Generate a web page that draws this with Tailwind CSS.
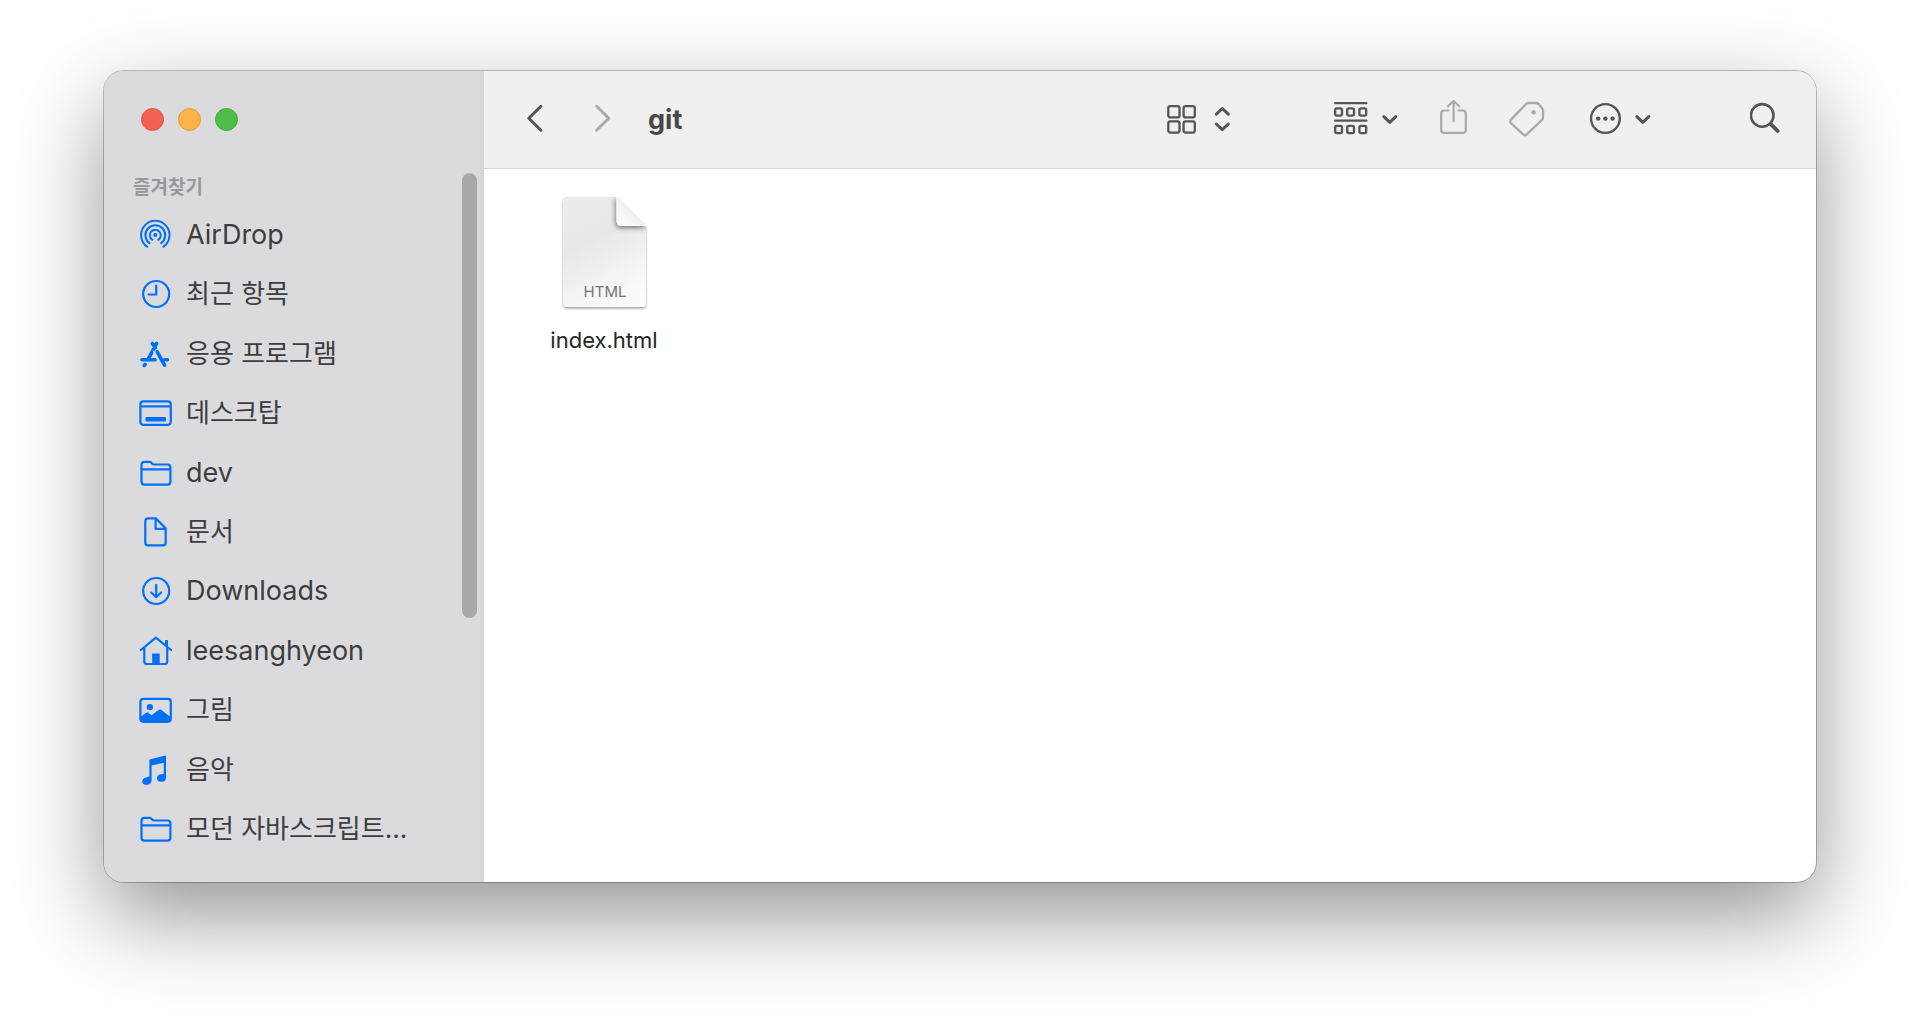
<!DOCTYPE html>
<html lang="ko">
<head>
<meta charset="utf-8">
<meta name="viewport" content="width=device-width, initial-scale=1">
<title>git</title>
<script src="https://cdn.jsdelivr.net/npm/@tailwindcss/browser@4"></script>
</head>
<body class="bg-white font-[Inter,'Noto_Sans_CJK_KR',sans-serif] text-[#3d3d3f]">
<div class="flex min-h-screen px-[104px] pt-[71px] pb-[138px]">
  <div class="flex flex-1 overflow-hidden rounded-[20px] bg-white shadow-[0_0_0_1px_rgba(0,0,0,0.24),0_34px_88px_rgba(0,0,0,0.42)]">

    <!-- Sidebar -->
    <aside class="relative flex w-[380px] shrink-0 flex-col border-r-4 border-[#d7d7d8] bg-[#dbdbdd] pb-[23px]">
      <div class="flex gap-[14px] pt-[37px] pl-[37px]">
        <button aria-label="닫기" class="size-[23px] rounded-full border border-[#d9544a] bg-[#f26052]"></button>
        <button aria-label="최소화" class="size-[23px] rounded-full border border-[#dba03d] bg-[#fab544]"></button>
        <button aria-label="확대" class="size-[23px] rounded-full border border-[#43a940] bg-[#4dbe4a]"></button>
      </div>
      <h2 class="mt-[43px] pl-[29px] text-[19px] leading-7 font-bold text-[#98989a]">즐겨찾기</h2>
      <nav class="mt-[3px] flex flex-1 flex-col">
        <ul class="grid flex-1 auto-rows-fr pr-12 pl-[34px] text-[26px] leading-8 text-[#3d3d3f]">
          <li class="flex"><a href="#" class="flex items-center gap-[14px] text-[27px]">
            <svg class="size-[34px] shrink-0" viewBox="0 0 34 34" fill="none" stroke="#0070f8" stroke-width="2" stroke-linecap="round"><circle cx="17.3" cy="17" r="2" fill="#0070f8" stroke="none"/><path d="M14.3 21.8a5.5 5.5 0 1 1 6 0M11.5 25.1a9.9 9.9 0 1 1 11.6 0M9.3 28.8a14.2 14.2 0 1 1 16 0"/></svg>
            AirDrop</a></li>
          <li class="flex"><a href="#" class="flex items-center gap-[14px]">
            <svg class="size-[34px] shrink-0" viewBox="0 0 34 34" fill="none" stroke="#0070f8" stroke-width="2.2" stroke-linecap="round"><circle cx="18.2" cy="17" r="13"/><path d="M18.2 8.5V17.5H10.5"/></svg>
            최근 항목</a></li>
          <li class="flex"><a href="#" class="flex items-center gap-[14px]">
            <svg class="size-[34px] shrink-0" viewBox="0 0 34 34" fill="none" stroke="#0070f8" stroke-width="3.6" stroke-linecap="round"><path d="M14.3 6.4 17.3 10.8M18.7 6.4 10.6 21.4M3.9 22.7H17M26.5 22.7H29.4M19.2 14.8 26.6 28.1M7.2 27.4 6.2 28.4"/><path stroke="#dbdbdd" stroke-width="1.3" d="M15.6 14.5 23.6 29.5"/></svg>
            응용 프로그램</a></li>
          <li class="flex"><a href="#" class="flex items-center gap-[14px]">
            <svg class="size-[34px] shrink-0" viewBox="0 0 34 34" fill="none" stroke="#0070f8" stroke-width="2.2"><rect x="2.4" y="5.4" width="30.4" height="23.4" rx="3"/><path d="M3 10.4H33"/><rect x="7.5" y="21" width="20.5" height="4.4" rx="1" fill="#0070f8" stroke="none"/></svg>
            데스크탑</a></li>
          <li class="flex"><a href="#" class="flex items-center gap-[14px] text-[27px]">
            <svg class="size-[34px] shrink-0" viewBox="0 0 34 34" fill="none" stroke="#0070f8" stroke-width="2.2" stroke-linejoin="round"><path d="M6.5 5.9H11.8C13.8 5.9 14 8.5 16 8.5H29.5Q32.4 8.5 32.4 11.4V25.7Q32.4 28.6 29.5 28.6H6.4Q3.5 28.6 3.5 25.7V8.8Q3.5 5.9 6.5 5.9ZM3.5 13.3H32.4"/></svg>
            dev</a></li>
          <li class="flex"><a href="#" class="flex items-center gap-[14px]">
            <svg class="size-[34px] shrink-0" viewBox="0 0 34 34" fill="none" stroke="#0070f8" stroke-width="2.2" stroke-linejoin="round"><path d="M17.8 3.4H10Q7.3 3.4 7.3 6.1V27.7Q7.3 30.4 10 30.4H25Q27.7 30.4 27.7 27.7V13.2ZM17.6 3.6V13.8H27.7"/></svg>
            문서</a></li>
          <li class="flex"><a href="#" class="flex items-center gap-[14px] text-[27px]">
            <svg class="size-[34px] shrink-0" viewBox="0 0 34 34" fill="none" stroke="#0070f8" stroke-width="2.2" stroke-linecap="round" stroke-linejoin="round"><circle cx="18.2" cy="17" r="13"/><path d="M18.2 10.8V23M13.3 18.5 18.2 23.2 23.1 18.5"/></svg>
            Downloads</a></li>
          <li class="flex"><a href="#" class="flex items-center gap-[14px] text-[27px]">
            <svg class="size-[34px] shrink-0" viewBox="0 0 34 34" fill="none" stroke="#0070f8" stroke-width="2.2" stroke-linecap="round" stroke-linejoin="round"><path d="M2.8 16 17.9 3.6 33 16M6.3 14V27.8Q6.3 30 8.5 30H27Q29.2 30 29.2 27.8V14"/><path fill="#0070f8" stroke="none" d="M14.2 19.5H21.7V30.5H14.2ZM27 6.6Q27 6 27.6 6H29.4Q30 6 30 6.6V13.2L27 10.6Z"/></svg>
            leesanghyeon</a></li>
          <li class="flex"><a href="#" class="flex items-center gap-[14px]">
            <svg class="size-[34px] shrink-0" viewBox="0 0 34 34" fill="none" stroke="#0070f8" stroke-width="2.2"><rect x="2.4" y="5.8" width="30.4" height="23" rx="3"/><circle cx="11.9" cy="14.1" r="3.2" fill="#0070f8" stroke="none"/><path fill="#0070f8" stroke="none" d="M3 23.5 8.2 19.7Q9.3 19 10.4 19.8L13.6 22.2 20.5 17Q22 16 23.5 17L33 24.5V27Q33 29 31 29H5Q3 29 3 27Z"/></svg>
            그림</a></li>
          <li class="flex"><a href="#" class="flex items-center gap-[14px]">
            <svg class="size-[34px] shrink-0" viewBox="0 0 34 34" fill="#0070f8"><path d="M12.3 6.2 27 2.5Q28 2.3 28 3.3V24.5Q28 28.8 23.7 28.8 19 28.8 19 25.3 19 22 22.8 21.3L25.8 20.7V9.7L13.6 12.5V27Q13.6 31.8 8.8 31.8 4.3 31.8 4.3 28.4 4.3 25.2 8 24.4L11.4 23.6V7.3Q11.4 6.4 12.3 6.2Z"/></svg>
            음악</a></li>
          <li class="flex"><a href="#" class="flex items-center gap-[14px]">
            <svg class="size-[34px] shrink-0" viewBox="0 0 34 34" fill="none" stroke="#0070f8" stroke-width="2.2" stroke-linejoin="round"><path d="M6.5 5.9H11.8C13.8 5.9 14 8.5 16 8.5H29.5Q32.4 8.5 32.4 11.4V25.7Q32.4 28.6 29.5 28.6H6.4Q3.5 28.6 3.5 25.7V8.8Q3.5 5.9 6.5 5.9ZM3.5 13.3H32.4"/></svg>
            모던 자바스크립트...</a></li>
        </ul>
      </nav>
      <!-- Overlay scrollbar thumb -->
      <div class="absolute top-[102px] right-[3px] h-[445px] w-[15px] rounded-full bg-[#a9a9ab]"></div>
    </aside>

    <!-- Main area -->
    <div class="flex min-w-0 flex-1 flex-col">
      <header class="flex h-[98px] shrink-0 items-center border-b border-[#d5d5d5] bg-[#f0f0f0] pr-[34px] pl-[42px] text-[#555]">
        <div class="flex gap-[50px]">
          <button aria-label="뒤로"><svg class="h-[41px] w-[18px]" viewBox="0 0 18 41" fill="none" stroke="currentColor" stroke-width="3" stroke-linecap="round" stroke-linejoin="round"><path d="M14.9 7.3 2.8 19.3 14.9 31.2"/></svg></button>
          <button aria-label="앞으로" class="text-[#aaa]" disabled><svg class="h-[41px] w-[18px]" viewBox="0 0 18 41" fill="none" stroke="currentColor" stroke-width="3" stroke-linecap="round" stroke-linejoin="round"><path d="M2.6 7.3 14.8 19.3 2.6 31.2"/></svg></button>
        </div>
        <h1 class="mr-auto ml-9 text-[27px] leading-8 font-bold text-[#474747]">git</h1>
        <button aria-label="보기" class="flex gap-4">
          <svg class="h-[41px] w-[30px]" viewBox="0 0 30 41" fill="none" stroke="currentColor" stroke-width="2.3"><rect x="1.3" y="7.2" width="11.2" height="11.2" rx="2"/><rect x="16.6" y="7.2" width="11.2" height="11.2" rx="2"/><rect x="1.3" y="22.4" width="11.2" height="11.2" rx="2"/><rect x="16.6" y="22.4" width="11.2" height="11.2" rx="2"/></svg>
          <svg class="h-[41px] w-[18px]" viewBox="0 0 18 41" fill="none" stroke="currentColor" stroke-width="3" stroke-linecap="round" stroke-linejoin="round"><path d="M3.3 15.2 9.3 9.5 15.3 15.2M3.3 25 9.3 30.7 15.3 25"/></svg>
        </button>
        <button aria-label="그룹" class="ml-[102px] flex gap-3">
          <svg class="h-[41px] w-9" viewBox="0 0 36 41" fill="none" stroke="currentColor" stroke-width="2.3" stroke-linecap="round"><path d="M2.2 4.2H33.4M2.2 21.7H33.4"/><rect x="2.2" y="9.4" width="6.8" height="7.2" rx="1.6"/><rect x="14.2" y="9.4" width="6.8" height="7.2" rx="1.6"/><rect x="26.4" y="9.4" width="6.8" height="7.2" rx="1.6"/><rect x="2.2" y="26.9" width="6.8" height="7.2" rx="1.6"/><rect x="14.2" y="26.9" width="6.8" height="7.2" rx="1.6"/><rect x="26.4" y="26.9" width="6.8" height="7.2" rx="1.6"/></svg>
          <svg class="h-[41px] w-[18px]" viewBox="0 0 18 41" fill="none" stroke="currentColor" stroke-width="3" stroke-linecap="round" stroke-linejoin="round"><path d="M2.8 17.6 8.8 23.3 14.8 17.6"/></svg>
        </button>
        <button aria-label="공유" class="ml-10 text-[#aaa]" disabled><svg class="h-[41px] w-[30px]" viewBox="0 0 30 41" fill="none" stroke="currentColor" stroke-width="2.2" stroke-linecap="round" stroke-linejoin="round"><path d="M9.5 11.5H5Q2.2 11.5 2.2 14.3V31Q2.2 33.8 5 33.8H24Q26.8 33.8 26.8 31V14.3Q26.8 11.5 24 11.5H19.5M14.6 22.3V2.2M8.9 7.3 14.6 2 20.3 7.3"/></svg></button>
        <button aria-label="태그" class="ml-[39px] text-[#aaa]" disabled><svg class="h-[41px] w-[38px]" viewBox="0 0 38 41" fill="none" stroke="currentColor" stroke-width="2.3" stroke-linejoin="round"><path d="M20.5 4H28.2Q29.5 4 30.5 5L34 9Q35 10 35 11.3V18.3Q35 19.9 33.9 21L19 35.2Q16.9 37.2 14.8 35.2L3.2 24.3Q1.2 22.4 3.2 20.4L18 5Q19 4 20.5 4Z"/><circle cx="25.6" cy="13.3" r="2.2" fill="currentColor" stroke="none"/></svg></button>
        <button aria-label="동작" class="ml-11 flex gap-3">
          <svg class="h-[41px] w-8" viewBox="0 0 32 41" fill="none" stroke="currentColor" stroke-width="2.4"><circle cx="15.4" cy="19.5" r="14.4"/><g fill="currentColor" stroke="none"><circle cx="8.2" cy="19.6" r="2.2"/><circle cx="15.4" cy="19.6" r="2.2"/><circle cx="22.6" cy="19.6" r="2.2"/></g></svg>
          <svg class="h-[41px] w-[18px]" viewBox="0 0 18 41" fill="none" stroke="currentColor" stroke-width="3" stroke-linecap="round" stroke-linejoin="round"><path d="M2.8 17.6 8.8 23.3 14.8 17.6"/></svg>
        </button>
        <button aria-label="검색" class="ml-[98px]"><svg class="h-[41px] w-8" viewBox="0 0 32 41" fill="none" stroke="currentColor" stroke-linecap="round"><circle cx="12.2" cy="16.4" r="11.3" stroke-width="2.6"/><path stroke-width="3.8" d="M20.8 25.2 27.6 31.9"/></svg></button>
      </header>

      <main class="flex flex-1 flex-wrap content-start pt-[27px] pl-14">
        <figure class="flex w-[128px] flex-col items-center">
          <svg class="h-[116px] w-[88px]" viewBox="0 0 88 116" role="img" aria-label="HTML 문서">
            <defs>
              <linearGradient id="page" x1=".3" y1="0" x2=".7" y2="1"><stop offset="0" stop-color="#ececec"/><stop offset=".35" stop-color="#e8e8e8"/><stop offset="1" stop-color="#fcfcfc"/></linearGradient>
              <linearGradient id="fold" x1="0" y1="1" x2=".6" y2=".4"><stop offset="0" stop-color="#fff"/><stop offset="1" stop-color="#ececec"/></linearGradient>
              <filter id="drop" x="-20%" y="-20%" width="140%" height="140%"><feDropShadow dx="0" dy="1.5" stdDeviation="1.3" flood-opacity=".38"/></filter>
              <filter id="curl" x="-50%" y="-50%" width="200%" height="200%"><feDropShadow dx="-1" dy="2" stdDeviation="2.6" flood-opacity=".5"/></filter>
              <clipPath id="sheet"><path d="M7 1H58L86 30V107Q86 111 82 111H7Q3 111 3 107V5Q3 1 7 1Z"/></clipPath>
            </defs>
            <path filter="url(#drop)" fill="url(#page)" d="M7 1H58L86 30V107Q86 111 82 111H7Q3 111 3 107V5Q3 1 7 1Z"/>
            <g clip-path="url(#sheet)"><path filter="url(#curl)" fill="url(#fold)" stroke="#fff" d="M57 0V25.5Q57 29.5 61 29.5H87Z"/></g>
            <text x="45" y="101" text-anchor="middle" font-size="15" fill="#747474">HTML</text>
          </svg>
          <figcaption class="mt-3 text-[22px] leading-8 text-[#252525]">index.html</figcaption>
        </figure>
      </main>
    </div>
  </div>
</div>
</body>
</html>
